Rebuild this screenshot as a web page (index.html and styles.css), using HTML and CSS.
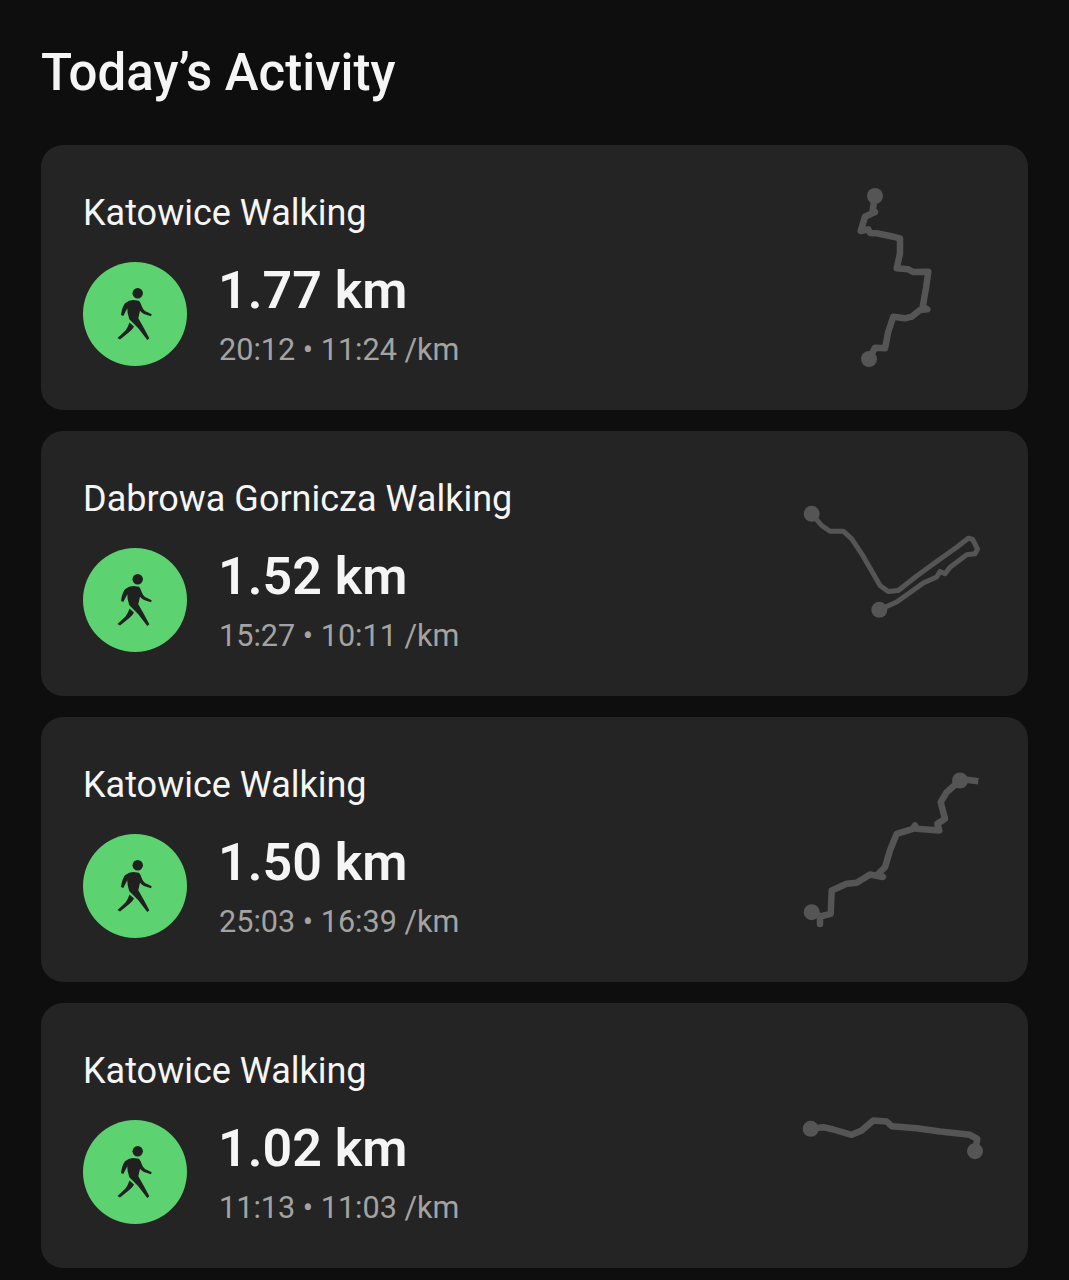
FILE: index.html
```html
<!DOCTYPE html>
<html lang="en">
<head>
    <meta charset="UTF-8">
    <title>Today's Activity</title>
    <link rel="stylesheet" href="styles.css">
</head>
<body>

<svg class="defs" width="0" height="0">
    <symbol id="walker" viewBox="0 0 104 104">
        <circle cx="54.7" cy="31.3" r="5.2"/>
        <path d="M38 53Q39 45 42 41.3 46 38 50.3 38L56 38.7Q58 41 59 44.7 60 47.5 62 49L68.7 52.3 68 54.3 61 52Q58.5 50.5 57 48.7 56 53 55.3 56.3L61 66.3 66.3 76.3 64.3 78 55.3 66.3 46.3 57.3Q44 51 44.3 46.3L40.3 54Z"/>
        <path d="M46.5 60.5 51 64.5Q50 67 46.3 70L37 77.5 34.5 76Q39 72 42.5 68.5 45 65 46.5 60.5Z"/>
    </symbol>
</svg>

<h1 class="title">Today’s Activity</h1>

<div class="card">
    <div class="info">
        <div class="name">Katowice Walking</div>
        <div class="stats">
            <svg class="badge"><use href="#walker"/></svg>
            <div>
                <div class="distance">1.77 km</div>
                <div class="meta">20:12 • 11:24 /km</div>
            </div>
        </div>
    </div>
    <svg class="route" viewBox="0 0 186 186">
        <polyline points="75,11 72.7,25 75,27 65,31.7 60.7,46 68.3,44.3 70,48 76.7,48.3 90,51 100,53.3 100,68.3 96.7,83.3 108.3,84.3 113,87 128.3,86.7 126,103.3 122.7,121.7 127.3,124.3 120,125 111.7,131.7 105,133.3 93.3,131.7 88.3,146.7 85,163.3 75,162.7 69,174"/>
        <circle cx="75" cy="11" r="8"/>
        <circle cx="69" cy="174" r="8"/>
    </svg>
</div>

<div class="card">
    <div class="info">
        <div class="name">Dabrowa Gornicza Walking</div>
        <div class="stats">
            <svg class="badge"><use href="#walker"/></svg>
            <div>
                <div class="distance">1.52 km</div>
                <div class="meta">15:27 • 10:11 /km</div>
            </div>
        </div>
    </div>
    <svg class="route route-thin" viewBox="0 0 186 186">
        <polyline points="11.7,42.8 21.7,54.5 30,60.2 43.3,60.2 51.7,67.8 61.7,82.8 73.3,102.8 80,114.5 88.3,120.5 98.3,119.5 116.7,105 136.7,90.5 156.7,76.2 168.3,67.2 172.7,68.5 177.5,77.8 175,82.8 166.7,83.8 150,96.2 145,102.8 140,100.5 136.7,106 123.3,112 115,118 96.7,131 79.3,138.8"/>
        <circle cx="11.7" cy="42.8" r="8"/>
        <circle cx="79.3" cy="138.8" r="8"/>
    </svg>
</div>

<div class="card">
    <div class="info">
        <div class="name">Katowice Walking</div>
        <div class="stats">
            <svg class="badge"><use href="#walker"/></svg>
            <div>
                <div class="distance">1.50 km</div>
                <div class="meta">25:03 • 16:39 /km</div>
            </div>
        </div>
    </div>
    <svg class="route" viewBox="0 0 186 186">
        <polyline points="178.3,24.2 166.7,22.8 160,23.5 146.7,35.2 140.7,45.2 145,61.8 137.3,66.8 139.3,73.5 116.7,71.8 115,68.5 113,71.8 96.7,76.8 90,93.5 85,110.2 78.3,116.8 83,120 70,117.5 56.7,125.8 46.7,126.8 31.7,133.5 30.7,156.8 20,159.5 20,167 20,159.5 11.7,155.2"/>
        <circle cx="160" cy="23.5" r="8"/>
        <circle cx="11.7" cy="155.2" r="8"/>
    </svg>
</div>

<div class="card">
    <div class="info">
        <div class="name">Katowice Walking</div>
        <div class="stats">
            <svg class="badge"><use href="#walker"/></svg>
            <div>
                <div class="distance">1.02 km</div>
                <div class="meta">11:13 • 11:03 /km</div>
            </div>
        </div>
    </div>
    <svg class="route" viewBox="0 0 186 186">
        <polyline points="10.7,85.8 23.3,84.2 33.3,86.5 51.7,91.8 61.7,87.5 73.3,77.5 86.7,78.5 91.7,83.2 116.7,85.2 140,88.5 170,91.8 177.3,95.8 175,108.2"/>
        <circle cx="10.7" cy="85.8" r="8"/>
        <circle cx="175" cy="108.2" r="8"/>
    </svg>
</div>

</body>
</html>
```

FILE: styles.css
```css
body {
    margin: 0;
    padding: 0 41px 0 41px;
    background-color: #0e0e0e;
    font-family: Roboto, sans-serif;
    color: #f5f5f5;
}
.defs {
    position: absolute;
}
.title {
    margin: 0;
    padding-top: 43px;
    height: 145px;
    font-size: 51px;
    line-height: 60px;
    font-weight: 500;
    box-sizing: border-box;
}
.card {
    display: flex;
    justify-content: space-between;
    align-items: center;
    height: 265px;
    box-sizing: border-box;
    margin-bottom: 21px;
    padding: 0 42px;
    background-color: #242424;
    border-radius: 22px;
}
.info {
    padding-bottom: 2px;
}
.name {
    font-size: 36px;
    line-height: 50px;
    margin-bottom: 24px;
}
.stats {
    display: flex;
    align-items: flex-start;
    gap: 32px;
    height: 104px;
}
.badge {
    display: block;
    width: 104px;
    height: 104px;
    border-radius: 50%;
    background-color: #5dd270;
    fill: #202020;
}
.distance {
    font-size: 52px;
    line-height: 56px;
    font-weight: 600;
    margin-left: -1px;
    padding-top: 1px;
}
.meta {
    font-size: 30.6px;
    line-height: 42px;
    margin-top: 10px;
    color: #a3a3a3;
}
.route {
    display: block;
    width: 186px;
    height: 186px;
    fill: #555;
}
.route polyline {
    fill: none;
    stroke: #555;
    stroke-width: 6.5;
    stroke-linejoin: round;
}
.route-thin polyline {
    stroke-width: 5;
}
```
